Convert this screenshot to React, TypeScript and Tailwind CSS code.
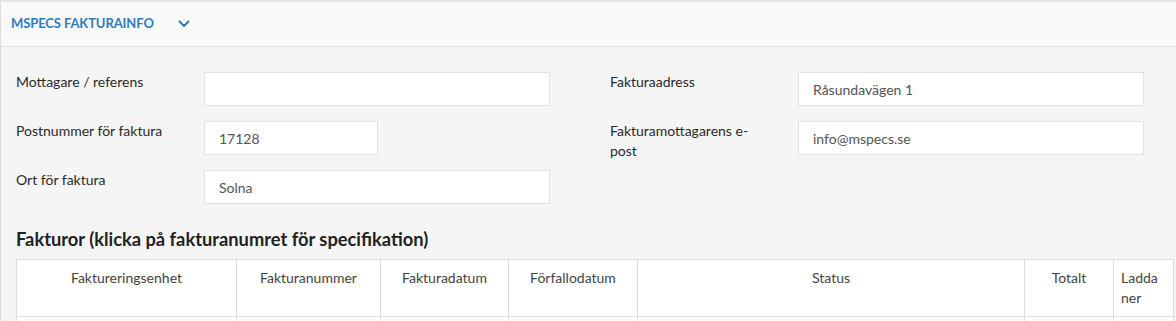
import React from "react";

const font = { fontFamily: "Lato, 'Open Sans', sans-serif" };

function Field({ label, value, w }: { label: string; value: string; w: string }) {
  return (
    <div className="flex items-start">
      <div className="w-[156px] mr-[32px] flex-none text-[14px] leading-[20px] text-[#2a2a2a]">{label}</div>
      <div className={`${w} h-[34px] flex-none bg-white border border-[#e1e1e1] flex items-center pl-[14px] pr-[13px] text-[14px] text-[#555]`}>
        {value}
      </div>
    </div>
  );
}

export default function App() {
  const cols: { t: string; w: string; left?: boolean }[] = [
    { t: "Faktureringsenhet", w: "w-[220px]" },
    { t: "Fakturanummer", w: "w-[144px]" },
    { t: "Fakturadatum", w: "w-[128px]" },
    { t: "Förfallodatum", w: "w-[129px]" },
    { t: "Status", w: "w-[387px]" },
    { t: "Totalt", w: "w-[89px]" },
    { t: "Ladda ner", w: "w-[60px]", left: true },
  ];
  return (
    <div style={font} className="w-[1176px] h-[321px] overflow-hidden bg-[#f5f5f5] border-t-2 border-t-[#e6e6e6] border-l border-l-[#dcdcdc]">
      <div className="h-[45px] bg-[#f9f9f9] border-b border-[#dedede] flex items-center pl-[10px]">
        <span className="text-[13px] font-bold text-[#2f7bbf] tracking-[-0.1px]">MSPECS FAKTURAINFO</span>
        <svg className="ml-[24px] mt-[-1px]" width="12" height="8" viewBox="0 0 12 8">
          <path d="M1.5 1.5 L6 6 L10.5 1.5" fill="none" stroke="#2f7bbf" strokeWidth="2" strokeLinecap="round" strokeLinejoin="round" />
        </svg>
      </div>
      <div className="pl-[15px] pt-[25px]">
        <div className="flex">
          <div className="w-[594px] flex flex-col gap-[15px]">
            <Field label="Mottagare / referens" value="" w="w-[346px]" />
            <Field label="Postnummer för faktura" value="17128" w="w-[174px]" />
            <Field label="Ort för faktura" value="Solna" w="w-[346px]" />
          </div>
          <div className="flex flex-col gap-[15px]">
            <Field label="Fakturaadress" value="Råsundavägen 1" w="w-[346px]" />
            <Field label="Fakturamottagarens e-post" value="info@mspecs.se" w="w-[346px]" />
          </div>
        </div>
        <h2 className="mt-[23px] text-[18.3px] leading-[24px] font-bold text-[#222]">
          Fakturor (klicka på fakturanumret för specifikation)
        </h2>
        <table className="mt-[8px] table-fixed border-collapse bg-white w-[1158px]">
          <thead>
            <tr>
              {cols.map((c) => (
                <th
                  key={c.t}
                  className={`${c.w} border border-[#dddddd] align-top font-normal text-[14px] leading-[20px] text-[#444] px-[7px] pt-[8px] pb-[8px] h-[57px] ${c.left ? "text-left" : "text-center"}`}
                >
                  {c.t}
                </th>
              ))}
            </tr>
          </thead>
          <tbody>
            <tr>
              {cols.map((c) => (
                <td key={c.t} className="border border-[#dddddd] h-[40px]"></td>
              ))}
            </tr>
          </tbody>
        </table>
      </div>
    </div>
  );
}
